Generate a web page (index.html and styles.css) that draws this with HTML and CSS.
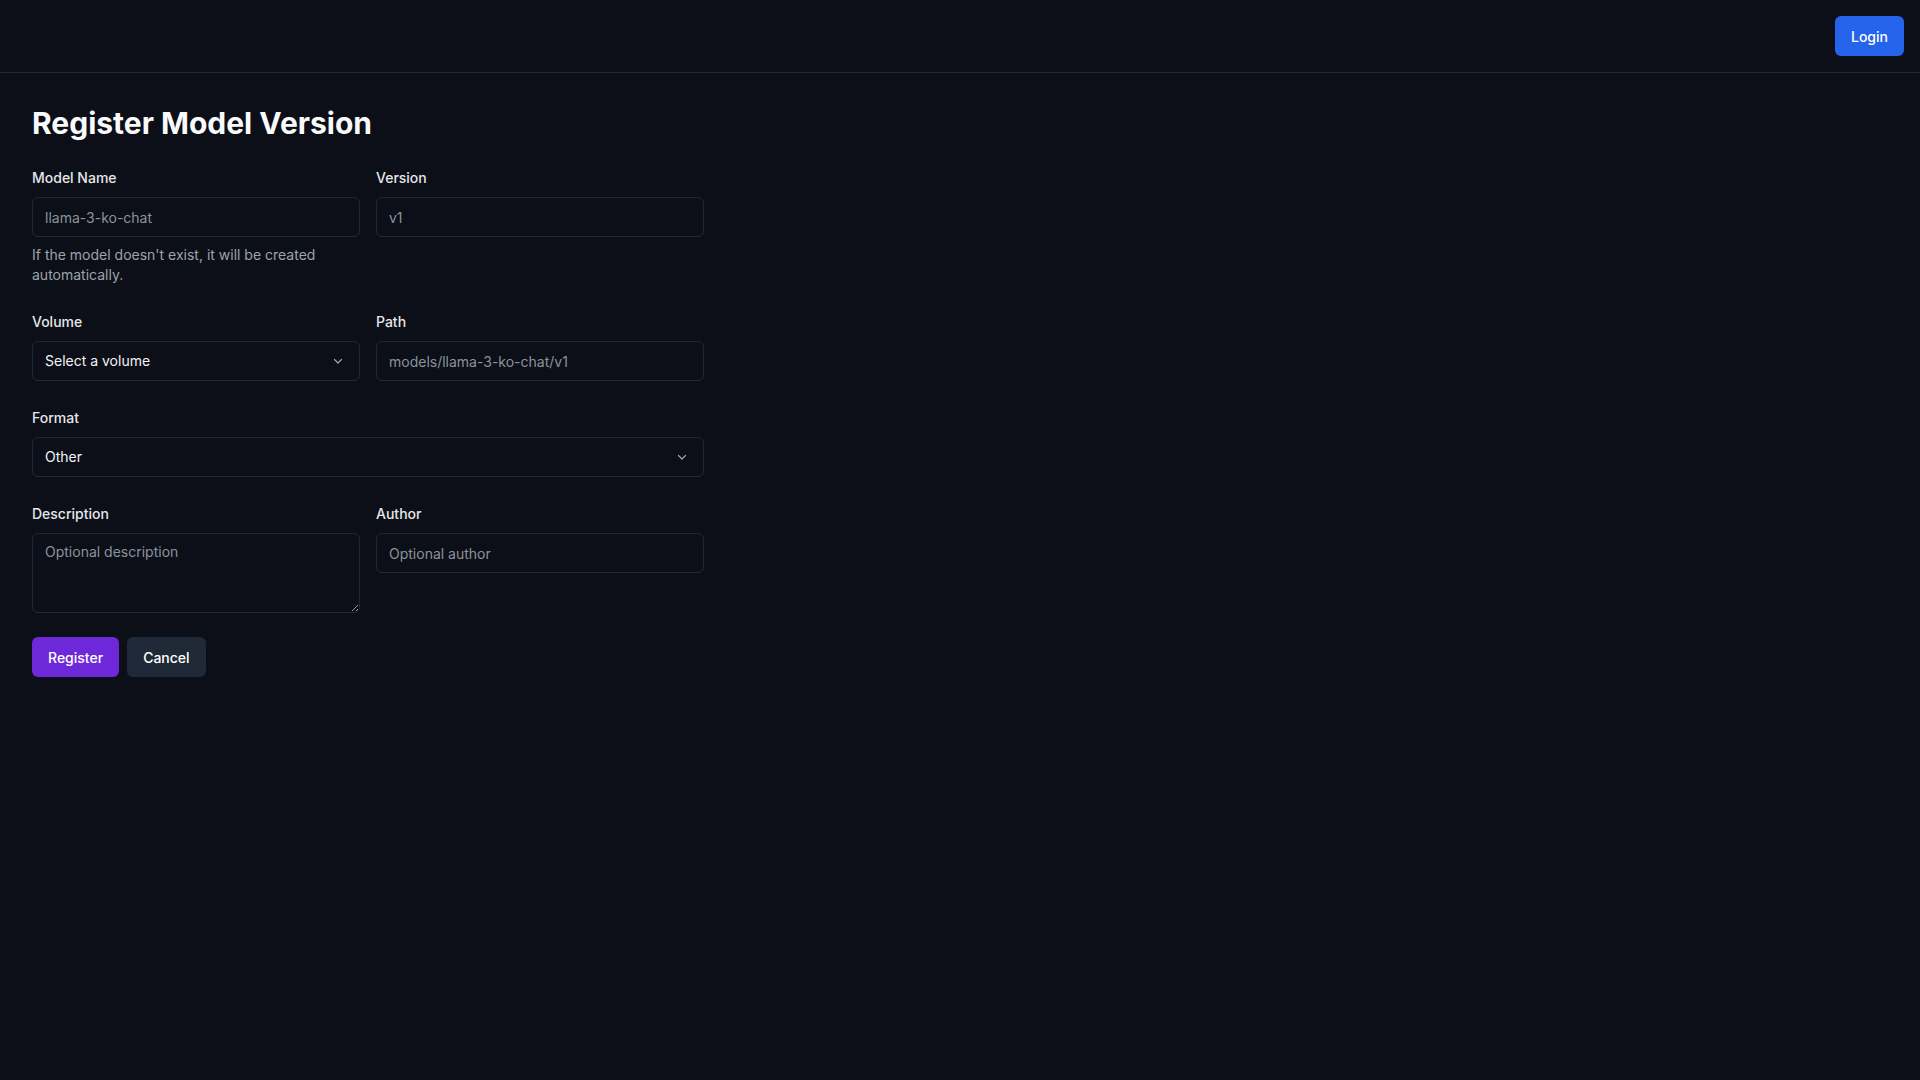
FILE: index.html
```html
<!DOCTYPE html>
<html>
<head>
    <title>Register Model Version</title>
    <link rel="stylesheet" href="styles.css">
</head>
<body>

<header class="topbar">
    <button class="btn btn-login">Login</button>
</header>

<main class="page">
    <h1 class="title">Register Model Version</h1>

    <form class="form">
        <div class="row">
            <div class="field">
                <label>Model Name</label>
                <input type="text" placeholder="llama-3-ko-chat">
                <p class="hint">If the model doesn't exist, it will be created automatically.</p>
            </div>
            <div class="field">
                <label>Version</label>
                <input type="text" placeholder="v1">
            </div>
        </div>

        <div class="row">
            <div class="field">
                <label>Volume</label>
                <div class="select">
                    <span>Select a volume</span>
                    <svg width="12" height="12" viewBox="0 0 12 12"><path d="M2.5 4.5 6 8l3.5-3.5" fill="none" stroke="#9ca3af" stroke-width="1.2" stroke-linecap="round" stroke-linejoin="round"/></svg>
                </div>
            </div>
            <div class="field">
                <label>Path</label>
                <input type="text" placeholder="models/llama-3-ko-chat/v1">
            </div>
        </div>

        <div class="row single">
            <div class="field">
                <label>Format</label>
                <div class="select">
                    <span>Other</span>
                    <svg width="12" height="12" viewBox="0 0 12 12"><path d="M2.5 4.5 6 8l3.5-3.5" fill="none" stroke="#9ca3af" stroke-width="1.2" stroke-linecap="round" stroke-linejoin="round"/></svg>
                </div>
            </div>
        </div>

        <div class="row">
            <div class="field">
                <label>Description</label>
                <textarea rows="3" placeholder="Optional description"></textarea>
            </div>
            <div class="field">
                <label>Author</label>
                <input type="text" placeholder="Optional author">
            </div>
        </div>

        <div class="actions">
            <button type="button" class="btn btn-primary">Register</button>
            <button type="button" class="btn btn-secondary">Cancel</button>
        </div>
    </form>
</main>

</body>
</html>
```

FILE: styles.css
```css
* {
    box-sizing: border-box;
}

body {
    margin: 0;
    min-height: 100vh;
    background-color: #0c0f17;
    color: #f3f4f6;
    font-family: Inter, "Noto Sans", sans-serif;
    font-size: 14px;
    line-height: 20px;
}

.topbar {
    height: 73px;
    display: flex;
    justify-content: flex-end;
    align-items: center;
    padding: 0 16px;
    border-bottom: 1px solid #1f2937;
}

.page {
    padding: 32px;
}

.title {
    margin: 0 0 27px;
    font-size: 30px;
    line-height: 36px;
    font-weight: 700;
    color: #f9fafb;
}

.form {
    width: 672px;
    display: flex;
    flex-direction: column;
    gap: 27px;
}

.row {
    display: grid;
    grid-template-columns: 1fr 1fr;
    gap: 16px;
}

.row.single {
    grid-template-columns: 1fr;
}

.field {
    display: flex;
    flex-direction: column;
}

label {
    display: block;
    margin-bottom: 9px;
    font-weight: 500;
    color: #e5e7eb;
}

input,
textarea,
.select {
    width: 100%;
    height: 40px;
    padding: 0 12px;
    border: 1px solid #1f2937;
    border-radius: 6px;
    background-color: transparent;
    color: #f3f4f6;
    font-family: inherit;
    font-size: 14px;
    line-height: 20px;
    outline: none;
}

textarea {
    display: block;
    height: 80px;
    padding: 8px 12px;
    resize: vertical;
}

input::placeholder,
textarea::placeholder {
    color: #8b929d;
}

.select {
    display: flex;
    align-items: center;
    justify-content: space-between;
    padding-right: 15px;
}

.hint {
    margin: 8px 0 0;
    color: #9ca3af;
}

.actions {
    display: flex;
    gap: 8px;
    margin-top: -3px;
}

.btn {
    height: 40px;
    padding: 0 16px;
    border: none;
    border-radius: 6px;
    font-family: inherit;
    font-size: 14px;
    font-weight: 500;
    color: #ffffff;
    cursor: pointer;
}

.btn-login {
    background-color: #2563eb;
}

.btn-primary {
    background-color: #6d28d9;
}

.btn-secondary {
    background-color: #1f2937;
}
```
